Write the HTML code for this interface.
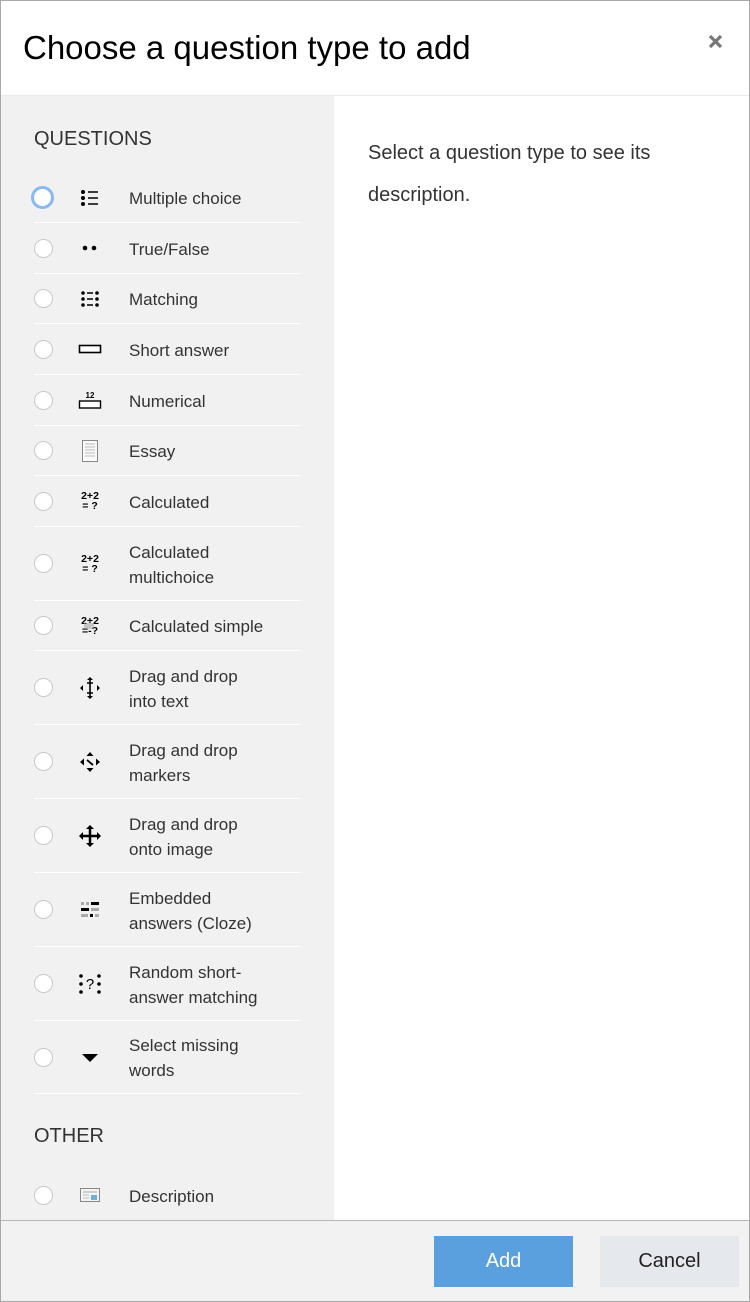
<!DOCTYPE html>
<html><head><meta charset="utf-8"><style>
*{margin:0;padding:0;box-sizing:border-box}
body{width:750px;height:1302px;position:relative;font-family:"Liberation Sans",sans-serif;background:#fff;overflow:hidden}
.frame{position:absolute;left:0;top:0;width:750px;height:1302px;border:1px solid #a8a8a8}
.title{position:absolute;left:23px;top:29px;font-size:33px;color:#000}
.close{position:absolute;left:706px;top:32px}
.hdr{position:absolute;left:1px;top:95px;width:748px;height:1px;background:#e8e9ec}
.left{position:absolute;left:1px;top:96px;width:333px;height:1124px;background:#f1f1f1}
.sec{position:absolute;left:34px;font-size:20px;color:#333}
.row{position:absolute;left:34px;width:267px;border-bottom:1px solid #fff;display:flex;align-items:center}
.radio{position:absolute;left:0;width:19px;height:19px;border-radius:50%;background:#fff;border:1px solid #c8c8c8}
.radio.f{border:3px solid #8ab8f2;width:23px;height:23px;left:-3px}
.ic{position:absolute;left:44px;width:24px;height:24px;display:flex;align-items:center;justify-content:center}
.txt{position:absolute;left:95px;font-size:17px;color:#333;line-height:25px;padding-top:2px}
.desc{position:absolute;left:368px;top:132px;font-size:20px;line-height:42px;color:#333;width:360px}
.foot{position:absolute;left:1px;top:1220px;width:748px;height:81px;background:#f2f2f2;border-top:1px solid #b8b8b8}
.add{position:absolute;left:434px;top:1236px;width:139px;height:51px;background:#5ba0de;color:#fff;font-size:20px;text-align:center;line-height:51px}
.cancel{position:absolute;left:600px;top:1236px;width:139px;height:51px;background:#e5e8ec;color:#222;font-size:20px;text-align:center;line-height:51px}
</style></head><body>
<div class="frame"></div>
<div class="title">Choose a question type to add</div>
<svg class="close" width="20" height="20" viewBox="0 0 20 20"><path d="M4 4L15 15M15 4L4 15" stroke="#777" stroke-width="3.2"/></svg>
<div class="hdr"></div>
<div class="left"></div>
<div class="sec" style="top:128px">QUESTIONS</div>
<div class="desc">Select a question type to see its description.</div>

<div class="row" style="top:173px;height:50px"><div class="radio f"></div><div class="ic"><svg width="20" height="18"><circle cx="3" cy="3" r="2"/><circle cx="3" cy="9" r="2"/><circle cx="3" cy="15" r="2"/><path d="M8 3h10M8 9h10M8 15h10" stroke="#000" stroke-width="1.5"/></svg></div><div class="txt">Multiple choice</div></div>
<div class="row" style="top:223px;height:51px"><div class="radio"></div><div class="ic"><svg width="20" height="8"><circle cx="5" cy="4" r="2.3"/><circle cx="14" cy="4" r="2.3"/></svg></div><div class="txt">True/False</div></div>
<div class="row" style="top:274px;height:50px"><div class="radio"></div><div class="ic"><svg width="20" height="18"><circle cx="3" cy="3" r="1.8"/><circle cx="3" cy="9" r="1.8"/><circle cx="3" cy="15" r="1.8"/><circle cx="17" cy="3" r="1.8"/><circle cx="17" cy="9" r="1.8"/><circle cx="17" cy="15" r="1.8"/><path d="M7 3h6M7 9h6M7 15h6" stroke="#000" stroke-width="1.4"/></svg></div><div class="txt">Matching</div></div>
<div class="row" style="top:324px;height:51px"><div class="radio"></div><div class="ic"><svg width="24" height="10"><rect x="1.5" y="1.5" width="21" height="7" fill="#fff" stroke="#000" stroke-width="1.6"/></svg></div><div class="txt">Short answer</div></div>
<div class="row" style="top:375px;height:51px"><div class="radio"></div><div class="ic"><svg width="24" height="20"><text x="12" y="8" font-size="8" font-weight="bold" text-anchor="middle" font-family="Liberation Sans">12</text><rect x="1.5" y="11" width="21" height="7" fill="#fff" stroke="#000" stroke-width="1.4"/></svg></div><div class="txt">Numerical</div></div>
<div class="row" style="top:426px;height:50px"><div class="radio"></div><div class="ic"><svg width="20" height="24"><rect x="2.5" y="1.5" width="15" height="21" fill="#fafafa" stroke="#888"/><path d="M5 5h10M5 8h10M5 11h10M5 14h10M5 17h10" stroke="#bbb"/></svg></div><div class="txt">Essay</div></div>
<div class="row" style="top:476px;height:51px"><div class="radio"></div><div class="ic"><svg width="24" height="22"><text x="12" y="9" font-size="10.5" font-weight="bold" text-anchor="middle" font-family="Liberation Sans">2+2</text><text x="12" y="19" font-size="10.5" font-weight="bold" text-anchor="middle" font-family="Liberation Sans">= ?</text></svg></div><div class="txt">Calculated</div></div>
<div class="row" style="top:527px;height:74px"><div class="radio"></div><div class="ic"><svg width="24" height="22"><text x="12" y="9" font-size="10.5" font-weight="bold" text-anchor="middle" font-family="Liberation Sans">2+2</text><text x="12" y="19" font-size="10.5" font-weight="bold" text-anchor="middle" font-family="Liberation Sans">= ?</text></svg></div><div class="txt">Calculated<br>multichoice</div></div>
<div class="row" style="top:601px;height:50px"><div class="radio"></div><div class="ic"><svg width="24" height="22"><text x="12" y="9" font-size="10.5" font-weight="bold" text-anchor="middle" font-family="Liberation Sans">2+2</text><text x="12" y="19" font-size="10.5" font-weight="bold" text-anchor="middle" font-family="Liberation Sans">=-?</text><rect x="6" y="8" width="10" height="6" fill="#999" opacity=".5"/></svg></div><div class="txt">Calculated simple</div></div>
<div class="row" style="top:651px;height:74px"><div class="radio"></div><div class="ic"><svg width="24" height="24"><path d="M12 3v18M9 7h6M9 17h6" stroke="#000" stroke-width="1.6"/><path d="M12 1l-3 3h6zM12 23l-3-3h6zM2 12l3-3v6zM22 12l-3-3v6z"/></svg></div><div class="txt">Drag and drop<br>into text</div></div>
<div class="row" style="top:725px;height:74px"><div class="radio"></div><div class="ic"><svg width="24" height="24"><path d="M12 2l-3.5 4h7zM12 22l-3.5-4h7zM2 12l4-3.5v7zM22 12l-4-3.5v7z"/><path d="M9 10l6 5" stroke="#000" stroke-width="1.8"/></svg></div><div class="txt">Drag and drop<br>markers</div></div>
<div class="row" style="top:799px;height:74px"><div class="radio"></div><div class="ic"><svg width="24" height="24"><path d="M12 4v16M4 12h16" stroke="#000" stroke-width="2.5"/><path d="M12 1l-4 4h8zM12 23l-4-4h8zM1 12l4-4v8zM23 12l-4-4v8z"/></svg></div><div class="txt">Drag and drop<br>onto image</div></div>
<div class="row" style="top:873px;height:74px"><div class="radio"></div><div class="ic"><svg width="22" height="20"><rect x="2" y="2" width="3" height="3" fill="#aaa"/><rect x="7" y="2" width="3" height="3" fill="#aaa"/><rect x="12" y="2" width="8" height="3"/><rect x="2" y="8" width="8" height="3"/><rect x="12" y="8" width="8" height="3" fill="#aaa"/><rect x="2" y="14" width="7" height="3" fill="#aaa"/><rect x="11" y="14" width="3" height="3"/><rect x="16" y="14" width="4" height="3" fill="#aaa"/></svg></div><div class="txt">Embedded<br>answers (Cloze)</div></div>
<div class="row" style="top:947px;height:74px"><div class="radio"></div><div class="ic"><svg width="24" height="22"><circle cx="3" cy="3" r="1.8"/><circle cx="3" cy="11" r="1.8"/><circle cx="3" cy="19" r="1.8"/><circle cx="21" cy="3" r="1.8"/><circle cx="21" cy="11" r="1.8"/><circle cx="21" cy="19" r="1.8"/><text x="12" y="16" font-size="15" text-anchor="middle" font-family="Liberation Sans">?</text></svg></div><div class="txt">Random short-<br>answer matching</div></div>
<div class="row" style="top:1021px;height:73px"><div class="radio"></div><div class="ic"><svg width="20" height="12"><path d="M2 3h16l-8 8z"/></svg></div><div class="txt">Select missing<br>words</div></div>
<div class="sec" style="top:1125px">OTHER</div>
<div class="row" style="top:1170px;height:50px;border-bottom:none"><div class="radio"></div><div class="ic"><svg width="22" height="16"><rect x="1.5" y="1.5" width="19" height="13" fill="#f4f4f4" stroke="#888"/><path d="M4 5h14" stroke="#aaa"/><path d="M4 8h6M4 11h6" stroke="#bbb"/><rect x="12" y="8" width="6" height="5" fill="#6ab0d8"/></svg></div><div class="txt">Description</div></div>

<div class="foot"></div>
<div class="add">Add</div>
<div class="cancel">Cancel</div>
</body></html>
